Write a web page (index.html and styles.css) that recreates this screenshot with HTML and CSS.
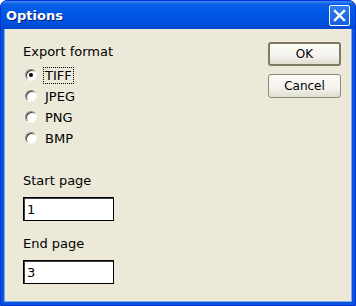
FILE: index.html
```html
<!DOCTYPE html>
<html lang="en">
<head>
    <meta charset="UTF-8">
    <title>Options</title>
    <link rel="stylesheet" href="styles.css">
</head>
<body>
    <div class="window">
        <div class="titlebar">
            <span class="title">Options</span>
            <div class="close">
                <svg width="13" height="13" viewBox="0 0 13 13">
                    <path d="M2 2 L11 11 M11 2 L2 11" stroke="#fff" stroke-width="2.4" stroke-linecap="square"/>
                </svg>
            </div>
        </div>
        <div class="client">
            <div class="form">
                <div class="label">Export format</div>
                <div class="radios">
                    <div class="radio-row"><span class="radio checked"></span><span class="radio-label focus">TIFF</span></div>
                    <div class="radio-row"><span class="radio"></span><span class="radio-label">JPEG</span></div>
                    <div class="radio-row"><span class="radio"></span><span class="radio-label">PNG</span></div>
                    <div class="radio-row"><span class="radio"></span><span class="radio-label">BMP</span></div>
                </div>
                <div class="label start">Start page</div>
                <input class="field" type="text" value="1">
                <div class="label end">End page</div>
                <input class="field" type="text" value="3">
            </div>
            <div class="buttons">
                <button class="btn default">OK</button>
                <button class="btn">Cancel</button>
            </div>
        </div>
    </div>
</body>
</html>
```

FILE: styles.css
```css
body {
    margin: 0;
    padding: 0;
    font-family: "DejaVu Sans", sans-serif;
    font-size: 13px;
    background-color: #ffffff;
}
.window {
    width: 356px;
    height: 306px;
    box-sizing: border-box;
    background-color: #0855dd;
    border: 1px solid #0831d9;
    border-radius: 7px 7px 0 0;
    display: flex;
    flex-direction: column;
    overflow: hidden;
}
.titlebar {
    height: 28px;
    flex-shrink: 0;
    display: flex;
    align-items: center;
    justify-content: space-between;
    padding: 0 5px 0 5px;
    background: linear-gradient(to bottom, #3d8cf5 0%, #0a5fe8 12%, #0058e6 40%, #0053e0 75%, #0046cf 100%);
}
.title {
    color: #ffffff;
    font-weight: bold;
    font-size: 13px;
    text-shadow: 1px 1px #0a1e6e;
}
.close {
    width: 19px;
    height: 19px;
    margin-top: 1px;
    border: 1px solid #ffffff;
    border-radius: 2px;
    background: linear-gradient(to bottom, #2f7cf0, #1a5ee0);
    display: flex;
    align-items: center;
    justify-content: center;
}
.client {
    flex: 1;
    margin: 0 3px 3px 3px;
    background-color: #ece9d8;
    border-left: 1px solid #7ea6f0;
    border-bottom: 1px solid #7ea6f0;
    border-right: 1px solid #7ea6f0;
    display: flex;
    justify-content: space-between;
    padding: 15px 10px 0 18px;
    color: #000000;
}
.form {
    display: flex;
    flex-direction: column;
}
.label {
    line-height: 16px;
}
.radios {
    margin-top: 7px;
    display: flex;
    flex-direction: column;
    gap: 5px;
}
.radio-row {
    display: flex;
    align-items: center;
    height: 16px;
    padding-left: 2px;
}
.radio {
    width: 12px;
    height: 12px;
    box-sizing: border-box;
    border-radius: 50%;
    background-color: #ffffff;
    border: 1px solid #8d8b82;
    border-right-color: #f8f7f2;
    border-bottom-color: #f8f7f2;
    box-shadow: inset 1px 1px 0 #404040;
    position: relative;
}
.radio.checked::after {
    content: "";
    position: absolute;
    left: 3px;
    top: 3px;
    width: 4px;
    height: 4px;
    border-radius: 50%;
    background-color: #000000;
}
.radio-label {
    margin-left: 6px;
    padding: 0 1px;
    border: 1px dotted transparent;
}
.radio-label.focus {
    border-color: #000000;
}
.start {
    margin-top: 27px;
}
.end {
    margin-top: 15px;
}
.field {
    margin-top: 8px;
    width: 91px;
    height: 24px;
    box-sizing: border-box;
    border: 1px solid #000000;
    box-shadow: inset 1px 1px 0 #404040;
    padding: 0 3px;
    font-family: "DejaVu Sans", sans-serif;
    font-size: 13px;
    background-color: #ffffff;
    outline: none;
}
.buttons {
    margin-top: -2px;
    display: flex;
    flex-direction: column;
    gap: 8px;
}
.btn {
    width: 73px;
    height: 24px;
    box-sizing: border-box;
    font-family: "DejaVu Sans", sans-serif;
    font-size: 12px;
    color: #000000;
    border: 1px solid #8c8a75;
    border-radius: 3px;
    background: linear-gradient(to bottom, #fcfcfa 0%, #f3f2ec 60%, #e1ded0 100%);
    padding: 0;
}
.btn.default {
    border: 2px solid #7e7b62;
}
```
